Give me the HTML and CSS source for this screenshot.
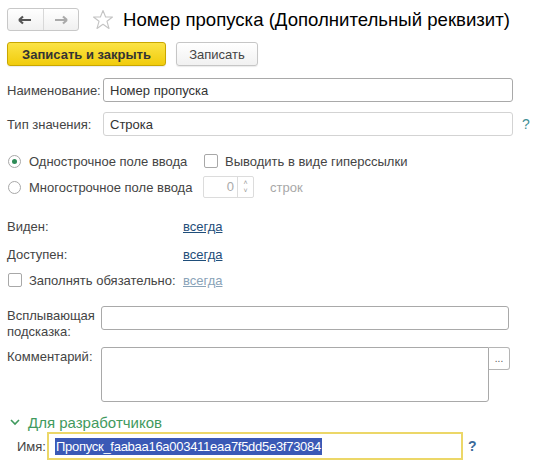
FILE: index.html
```html
<!DOCTYPE html>
<html lang="ru">
<head>
<meta charset="utf-8">
<link rel="stylesheet" href="styles.css">
</head>
<body>
<div class="page">
  <div class="header">
    <div class="nav">
      <div class="navbtn"><svg width="14" height="10" viewBox="0 0 14 10"><path d="M1 5H13M1 5L5 1.5M1 5L5 8.5" stroke="#555" stroke-width="2.2" fill="none"/></svg></div>
      <div class="navbtn"><svg width="14" height="10" viewBox="0 0 14 10"><path d="M1 5H13M13 5L9 1.5M13 5L9 8.5" stroke="#aaa" stroke-width="2.2" fill="none"/></svg></div>
    </div>
    <svg class="star" width="22" height="22" viewBox="0 0 22 22"><path d="M11 1.5L13.6 8H20.5L15 12.3L17 19.5L11 15.3L5 19.5L7 12.3L1.5 8H8.4Z" fill="none" stroke="#c4c4c4" stroke-width="1.1" stroke-linejoin="round"/></svg>
    <div class="title">Номер пропуска (Дополнительный реквизит)</div>
  </div>

  <div class="toolbar">
    <div class="btn primary">Записать и закрыть</div>
    <div class="btn">Записать</div>
  </div>

  <div class="row r-name">
    <div class="label w96">Наименование:</div>
    <div class="input w410">Номер пропуска</div>
  </div>
  <div class="row r-type">
    <div class="label w96">Тип значения:</div>
    <div class="input light w410">Строка</div>
    <div class="q teal">?</div>
  </div>

  <div class="row r-radio1">
    <div class="opt w196"><span class="radio on"></span>Однострочное поле ввода</div>
    <div class="opt"><span class="check"></span>Выводить в виде гиперссылки</div>
  </div>
  <div class="row r-radio2">
    <div class="opt w196"><span class="radio"></span>Многострочное поле ввода</div>
    <div class="spin"><span class="spin-val">0</span><span class="spin-arrows"><span>˄</span><span>˅</span></span></div>
    <div class="muted units">строк</div>
  </div>

  <div class="row r-seen">
    <div class="label w176">Виден:</div>
    <a class="link">всегда</a>
  </div>
  <div class="row r-avail">
    <div class="label w176">Доступен:</div>
    <a class="link">всегда</a>
  </div>
  <div class="row r-req">
    <div class="opt w176"><span class="check"></span>Заполнять обязательно:</div>
    <a class="link dim">всегда</a>
  </div>

  <div class="row r-tip">
    <div class="label w94 multi">Всплывающая<br>подсказка:</div>
    <div class="input w408"></div>
  </div>
  <div class="row r-comment">
    <div class="label w94 top">Комментарий:</div>
    <div class="textarea"></div>
    <div class="dots">...</div>
  </div>

  <div class="section">
    <svg class="chev" width="10" height="7" viewBox="0 0 10 7"><path d="M1 1L5 5L9 1" stroke="#3f9a5e" stroke-width="1.6" fill="none"/></svg>
    <span>Для разработчиков</span>
  </div>
  <div class="row r-id">
    <div class="label w30">Имя:</div>
    <div class="input focus"><span class="sel">Пропуск_faabaa16a003411eaa7f5dd5e3f73084</span></div>
    <div class="q blue">?</div>
  </div>
</div>
</body>
</html>
```
FILE: styles.css
```css
* { box-sizing: border-box; }
html, body { margin: 0; padding: 0; background: #fff; }
body { font-family: Arial, "Liberation Sans", sans-serif; font-size: 13px; color: #4a4a4a; }
.page { width: 538px; height: 474px; padding: 8px 0 0 7px; overflow: hidden; }

.header { display: flex; align-items: center; height: 23px; }
.nav { display: flex; width: 72px; height: 23px; border: 1px solid #c8c8c8; border-radius: 3px; background: linear-gradient(#fff, #f0f0f0); }
.navbtn { flex: 1; display: flex; align-items: center; justify-content: center; }
.navbtn + .navbtn { border-left: 1px solid #d8d8d8; }
.star { margin-left: 13px; }
.title { margin-left: 9px; font-size: 18.6px; color: #000; white-space: nowrap; }

.toolbar { display: flex; gap: 10px; margin-top: 11px; }
.btn { height: 24px; padding: 0 14px; border: 1px solid #c6c6c6; border-radius: 3px; background: linear-gradient(#fff, #f1f1f1); display: flex; align-items: center; color: #444; box-shadow: 0 1px 1px rgba(0,0,0,0.08); }
.btn.primary { width: 159px; justify-content: center; padding: 0; background: linear-gradient(#fbe346, #f1cc0c); border-color: #c9a700; color: #333; font-weight: bold; }
.btn:not(.primary) { width: 82px; justify-content: center; padding: 0; }

.row { display: flex; align-items: center; }
.label { flex: none; color: #444; }
.w96 { width: 96px; }
.w94 { width: 94px; }
.w176 { width: 176px; }
.w196 { width: 196px; }
.w30 { width: 40px; padding-left: 10px; }
.input { height: 24px; border: 1px solid #a9a9a9; border-radius: 3px; padding: 0 6px; display: flex; align-items: center; color: #333; }
.input.light { border-color: #d3d3d3; }
.w410 { width: 410px; }
.w408 { width: 408px; }
.q { margin-left: 9px; font-size: 14px; }
.teal { color: #3f8f94; }
.blue { color: #3c6a9a; font-weight: bold; margin-left: 5px; }

.r-name { margin-top: 12px; }
.r-type { margin-top: 10px; }
.r-radio1 { margin-top: 14px; height: 22px; margin-left: 1px; }
.r-radio2 { margin-top: 4px; height: 22px; margin-left: 1px; }
.opt { display: flex; align-items: center; color: #444; }
.radio { width: 13px; height: 13px; border: 1px solid #a8a8a8; border-radius: 50%; margin-right: 8px; display: flex; align-items: center; justify-content: center; background: #fff; }
.radio.on::after { content: ""; width: 5px; height: 5px; border-radius: 50%; background: #2e8b57; }
.check { width: 14px; height: 14px; border: 1px solid #a8a8a8; border-radius: 2px; margin-right: 7px; background: #fff; }
.spin { width: 51px; height: 22px; border: 1px solid #dcdcdc; border-radius: 2px; display: flex; color: #aaa; margin-left: -1px; }
.spin-val { flex: 1; text-align: right; padding-right: 3px; line-height: 20px; }
.spin-arrows { width: 16px; border-left: 1px solid #dcdcdc; display: flex; flex-direction: column; align-items: center; justify-content: center; font-size: 7px; line-height: 8px; color: #999; }
.units { margin-left: 16px; }
.muted { color: #a8a8a8; }

.r-seen { margin-top: 19px; height: 18px; }
.r-avail { margin-top: 10px; height: 18px; }
.r-req { margin-top: 8px; height: 18px; margin-left: 1px; }
.r-req .w176 { width: 175px; }
.link { color: #1f4e7a; text-decoration: underline; }
.link.dim { color: #8aa3b8; }

.r-tip { margin-top: 17px; align-items: flex-start; }
.multi { line-height: 16px; padding-top: 2px; }
.r-comment { margin-top: 7px; align-items: flex-start; }
.top { padding-top: 2px; }
.textarea { width: 388px; height: 55px; border: 1px solid #a9a9a9; border-radius: 3px 0 3px 3px; }
.dots { width: 21px; height: 23px; border: 1px solid #b5b5b5; border-left: none; border-radius: 0 3px 3px 0; font-size: 10px; color: #555; display: flex; align-items: center; justify-content: center; }

.section { display: flex; align-items: center; margin-top: 10px; margin-left: 3px; height: 20px; color: #3f9a5e; font-size: 15px; }
.chev { margin-right: 8px; }
.r-id { margin-top: 0; }
.input.focus { width: 416px; height: 28px; border: 2px solid #ecd768; border-radius: 0; padding: 0 6px; }
.sel { background: #3a59b6; color: #fff; line-height: 17px; padding: 0 1px; letter-spacing: -0.28px; }
```
